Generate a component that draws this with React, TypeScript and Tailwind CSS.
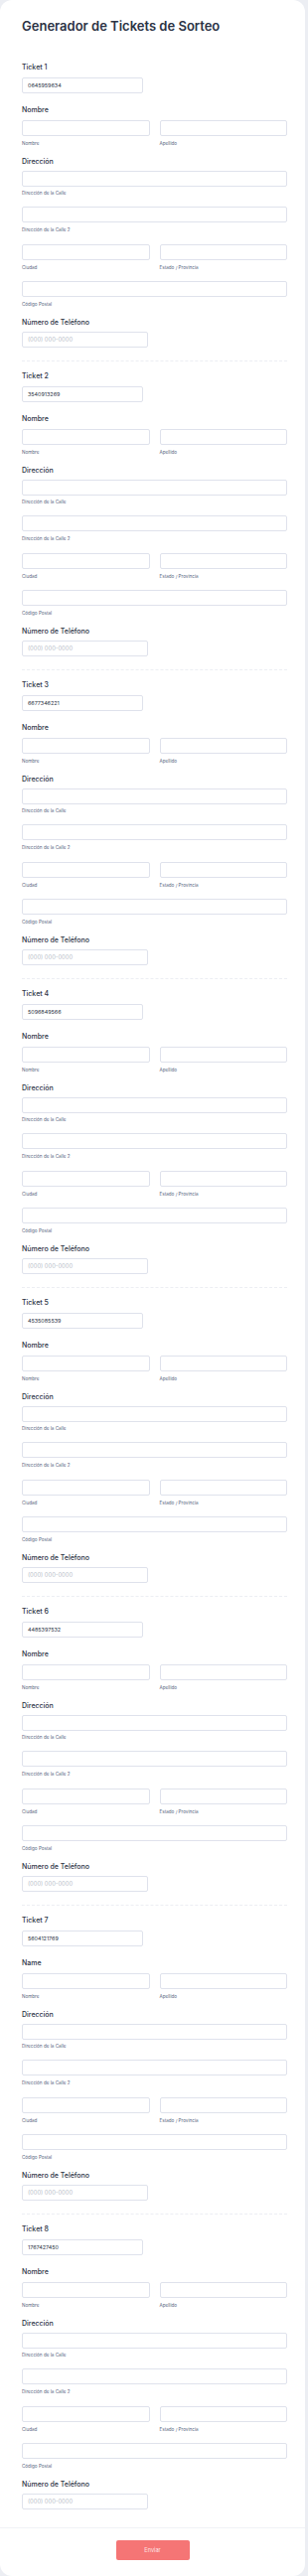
import React from 'react';

const TICKETS = [
  { id: 1, code: '0645959634', nameLabel: 'Nombre' },
  { id: 2, code: '3540913269', nameLabel: 'Nombre' },
  { id: 3, code: '6677346221', nameLabel: 'Nombre' },
  { id: 4, code: '5096849566', nameLabel: 'Nombre' },
  { id: 5, code: '4535085539', nameLabel: 'Nombre' },
  { id: 6, code: '4485397532', nameLabel: 'Nombre' },
  { id: 7, code: '5604121769', nameLabel: 'Name' },
  { id: 8, code: '1767427450', nameLabel: 'Nombre' },
];

const Label: React.FC<{ children: React.ReactNode; className?: string }> = ({ children, className = '' }) => (
  <div className={`h-[9px] text-[7px] leading-[9px] font-medium text-[#2c3345] ${className}`}>{children}</div>
);

const Sub: React.FC<{ children: React.ReactNode; className?: string }> = ({ children, className = '' }) => (
  <div className={`h-[6px] text-[4.6px] leading-[6px] text-[#57647e] ${className}`}>{children}</div>
);

const Box: React.FC<{ className?: string; children?: React.ReactNode }> = ({ className = '', children }) => (
  <div className={`h-[16px] rounded-[2px] border border-[#dfe2ec] bg-white flex items-center px-[5px] ${className}`}>
    {children}
  </div>
);

const TicketBlock: React.FC<{ id: number; code: string; nameLabel: string; last: boolean }> = ({ id, code, nameLabel, last }) => (
  <div className="flex flex-col">
    <Label>Ticket {id}</Label>
    <Box className="mt-[6.5px] w-[122px]">
      <span className="text-[5.4px] text-[#2c3345]">{code}</span>
    </Box>

    <Label className="mt-[11.5px]">{nameLabel}</Label>
    <div className="mt-[6.5px] grid grid-cols-2 gap-[10px]">
      <div className="flex flex-col">
        <Box />
        <Sub className="mt-[5px]">Nombre</Sub>
      </div>
      <div className="flex flex-col">
        <Box />
        <Sub className="mt-[5px]">Apellido</Sub>
      </div>
    </div>

    <Label className="mt-[9.5px]">Dirección</Label>
    <Box className="mt-[5.5px]" />
    <Sub className="mt-[4px]">Dirección de la Calle</Sub>
    <Box className="mt-[10px]" />
    <Sub className="mt-[5px]">Dirección de la Calle 2</Sub>
    <div className="mt-[11px] grid grid-cols-2 gap-[10px]">
      <div className="flex flex-col">
        <Box />
        <Sub className="mt-[5px]">Ciudad</Sub>
      </div>
      <div className="flex flex-col">
        <Box />
        <Sub className="mt-[5px]">Estado / Provincia</Sub>
      </div>
    </div>
    <Box className="mt-[10px]" />
    <Sub className="mt-[5px]">Código Postal</Sub>

    <Label className="mt-[9.5px]">Número de Teléfono</Label>
    <Box className="mt-[5.5px] w-[127px]">
      <span className="text-[5.8px] text-[#b8bdc9]">(000) 000-0000</span>
    </Box>

    {!last && <div className="mt-[13px] mb-[9.5px] border-t border-dashed border-[#eceef3]" />}
  </div>
);

export default function App() {
  return (
    <div className="w-[310px] h-[2594px] bg-[#eceef3] font-['Inter','Liberation_Sans',sans-serif]">
      <div className="w-[307px] h-[2594px] bg-white rounded-[12px] flex flex-col">
        <div className="pl-[22px] pr-[18px] pt-[18px]">
          <h1 className="text-[13px] leading-[16px] font-semibold text-[#2c3345]">Generador de Tickets de Sorteo</h1>
          <div className="mt-[28.5px] flex flex-col">
            {TICKETS.map((t, i) => (
              <TicketBlock key={t.id} id={t.id} code={t.code} nameLabel={t.nameLabel} last={i === TICKETS.length - 1} />
            ))}
          </div>
        </div>
        <div className="mt-[18px] border-t border-[#f1f2f6] flex justify-center pt-[12px]">
          <button className="w-[74px] h-[20px] rounded-[2px] bg-[#f57575] text-[5.6px] text-[#fde4e4]">Enviar</button>
        </div>
      </div>
    </div>
  );
}
